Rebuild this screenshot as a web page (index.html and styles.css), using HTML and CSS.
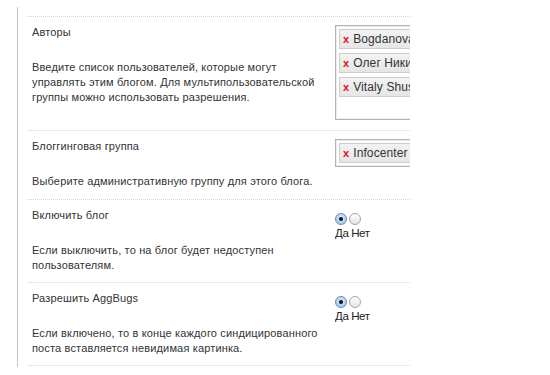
FILE: index.html
```html
<!DOCTYPE html>
<html lang="ru">
<head>
<meta charset="utf-8">
<title>Настройки блога</title>
<link rel="stylesheet" href="styles.css">
</head>
<body>
<div class="panel">
  <div class="row">
    <div class="info">
      <div class="label">Авторы</div>
      <div class="desc">Введите список пользователей, которые могут управлять этим блогом. Для мультипользовательской группы можно использовать разрешения.</div>
    </div>
    <div class="field">
      <div class="picker tall">
        <div class="token"><span class="x">x</span>Bogdanova Olga</div>
        <div class="token"><span class="x">x</span>Олег Никитин</div>
        <div class="token"><span class="x">x</span>Vitaly Shuster</div>
      </div>
    </div>
  </div>
  <div class="row">
    <div class="info">
      <div class="label">Блоггинговая группа</div>
      <div class="desc">Выберите административную группу для этого блога.</div>
    </div>
    <div class="field">
      <div class="picker">
        <div class="token"><span class="x">x</span>Infocenter</div>
      </div>
    </div>
  </div>
  <div class="row toggle">
    <div class="info">
      <div class="label">Включить блог</div>
      <div class="desc">Если выключить, то на блог будет недоступен пользователям.</div>
    </div>
    <div class="field">
      <div class="radios">
        <span class="radio on"></span><span class="radio"></span>
        <div class="radio-labels">Да Нет</div>
      </div>
    </div>
  </div>
  <div class="row toggle">
    <div class="info">
      <div class="label">Разрешить AggBugs</div>
      <div class="desc">Если включено, то в конце каждого синдицированного поста вставляется невидимая картинка.</div>
    </div>
    <div class="field">
      <div class="radios">
        <span class="radio on"></span><span class="radio"></span>
        <div class="radio-labels">Да Нет</div>
      </div>
    </div>
  </div>
</div>
</body>
</html>
```
FILE: styles.css
```css
html, body {
  margin: 0;
  padding: 0;
  background: #fff;
}
body {
  font-family: "Liberation Sans", Arial, sans-serif;
  font-size: 11px;
  line-height: 15px;
  letter-spacing: 0.15px;
  color: #333;
}
.panel {
  margin: 7px 0 0 17px;
  width: 383px;
  height: 351px;
  padding: 9px 0 0 9px;
  border-left: 1px solid #c4c4c4;
}
.row {
  display: flex;
  gap: 11px;
  padding: 8px 0 10px 5px;
  border-top: 1px dotted #d4d4d4;
}
.row.toggle {
  padding-bottom: 9px;
}
.row:last-child {
  border-bottom: 1px dotted #d4d4d4;
}
.info {
  width: 292px;
  flex: none;
}
.label {
  margin-bottom: 20px;
}
.field {
  flex: 1;
  overflow: hidden;
}
.picker {
  width: 160px;
  box-sizing: border-box;
  border: 1px solid #b4b4b4;
  box-shadow: inset 0 0 0 1px #ececec;
  padding: 3px;
  background: #fff;
}
.picker.tall {
  height: 95px;
}
.token {
  height: 18px;
  line-height: 18px;
  border: 1px solid #cdcdcd;
  background: linear-gradient(#f2f2f2, #e6e6e6);
  font-size: 12px;
  letter-spacing: 0.1px;
  color: #333;
  padding-left: 3px;
  white-space: nowrap;
  margin-bottom: 4px;
}
.token:last-child {
  margin-bottom: 0;
}
.x {
  color: #e01010;
  font-weight: bold;
  font-size: 11px;
  margin-right: 4px;
}
.radios {
  padding-top: 5px;
  line-height: 10px;
}
.radio {
  display: inline-block;
  width: 10px;
  height: 10px;
  border-radius: 50%;
  border: 1px solid #a8a8a8;
  background: linear-gradient(#ffffff, #e4e4e4);
  margin-right: 2px;
  vertical-align: top;
  position: relative;
}
.radio.on {
  border-color: #5d8fcc;
  background: radial-gradient(circle at 50% 40%, #e3eefb, #94b9e8);
}
.radio.on::after {
  content: "";
  position: absolute;
  left: 3px;
  top: 3px;
  width: 4px;
  height: 4px;
  border-radius: 50%;
  background: #111;
}
.radio-labels {
  font-size: 11.5px;
  line-height: 14px;
  color: #222;
  letter-spacing: -0.4px;
  margin-top: 1px;
}
```
